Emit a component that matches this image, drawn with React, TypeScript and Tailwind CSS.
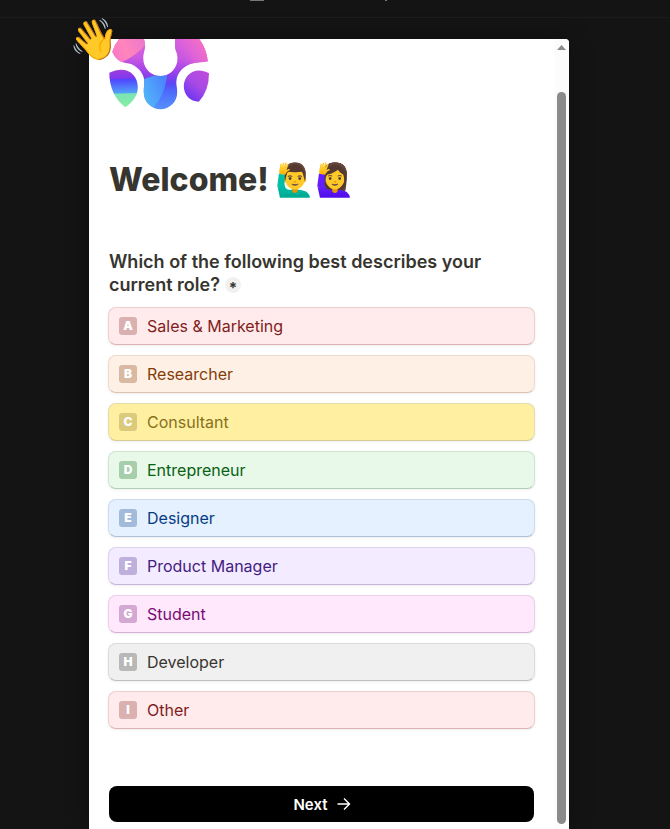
const options = [
  { key: "A", label: "Sales & Marketing", box: "bg-[#ffebeb] border-[#ecd0d0] border-b-[#dfb3b3]", badge: "bg-[#dbb0b1]", text: "text-[#7f1d1d]" },
  { key: "B", label: "Researcher", box: "bg-[#fff0e6] border-[#eddbd0] border-b-[#ddc1af]", badge: "bg-[#dab9a2]", text: "text-[#823d09]" },
  { key: "C", label: "Consultant", box: "bg-[#ffefa1] border-[#e5dcae] border-b-[#d6cb94]", badge: "bg-[#dbca7b]", text: "text-[#87711c]" },
  { key: "D", label: "Entrepreneur", box: "bg-[#e8f9ea] border-[#cfe4d2] border-b-[#b2ceb5]", badge: "bg-[#a7ceaa]", text: "text-[#096112]" },
  { key: "E", label: "Designer", box: "bg-[#e5f1ff] border-[#cddbec] border-b-[#aebfd8]", badge: "bg-[#a2bbdb]", text: "text-[#063c82]" },
  { key: "F", label: "Product Manager", box: "bg-[#f3ebff] border-[#ddd3eb] border-b-[#c2b4da]", badge: "bg-[#bfafdb]", text: "text-[#43207f]" },
  { key: "G", label: "Student", box: "bg-[#ffe8fc] border-[#ebcfe8] border-b-[#d9b0d5]", badge: "bg-[#d5a7d3]", text: "text-[#770b73]" },
  { key: "H", label: "Developer", box: "bg-[#f0f0f0] border-[#dbdbdb] border-b-[#bfbfbf]", badge: "bg-[#b8b8b7]", text: "text-[#37352f]" },
  { key: "I", label: "Other", box: "bg-[#ffebeb] border-[#ecd0d0] border-b-[#dfb3b3]", badge: "bg-[#dbb0b1]", text: "text-[#7f1d1d]" },
];

function Logo() {
  return (
    <svg viewBox="109 39 101 71" className="block h-[71px] w-[101px]">
      <defs>
        <linearGradient id="body" x1="0" y1="39" x2="0" y2="109" gradientUnits="userSpaceOnUse">
          <stop offset="0" stopColor="#e065da" />
          <stop offset=".25" stopColor="#cc5be0" />
          <stop offset=".43" stopColor="#a945e8" />
          <stop offset=".54" stopColor="#8340ea" />
          <stop offset=".64" stopColor="#5a48f4" />
          <stop offset=".75" stopColor="#4e6afb" />
          <stop offset="1" stopColor="#5591ff" />
        </linearGradient>
        <linearGradient id="pink" x1="113" y1="58" x2="146" y2="42" gradientUnits="userSpaceOnUse">
          <stop offset="0" stopColor="#fb77c8" />
          <stop offset=".4" stopColor="#ff85bb" />
          <stop offset="1" stopColor="#ec78cc" />
        </linearGradient>
        <linearGradient id="rose" x1="206" y1="44" x2="177" y2="66" gradientUnits="userSpaceOnUse">
          <stop offset="0" stopColor="#f870c2" />
          <stop offset=".5" stopColor="#dc62da" />
          <stop offset="1" stopColor="#b04ce6" stopOpacity="0" />
        </linearGradient>
        <linearGradient id="cyan" x1="144" y1="94" x2="165" y2="84" gradientUnits="userSpaceOnUse">
          <stop offset="0" stopColor="#52b2f8" />
          <stop offset="1" stopColor="#4b86ff" />
        </linearGradient>
        <linearGradient id="leafLeft" x1="123" y1="69" x2="124" y2="108" gradientUnits="userSpaceOnUse">
          <stop offset="0" stopColor="#a63ed9" />
          <stop offset=".24" stopColor="#7d38ef" />
          <stop offset=".27" stopColor="#5046ff" />
          <stop offset=".61" stopColor="#52a1f6" />
          <stop offset=".64" stopColor="#7ce3b5" />
          <stop offset="1" stopColor="#86f19e" />
        </linearGradient>
        <linearGradient id="leafRight" x1="208" y1="72" x2="188" y2="98" gradientUnits="userSpaceOnUse">
          <stop offset="0" stopColor="#bf4bdc" />
          <stop offset=".5" stopColor="#a94ae5" />
          <stop offset="1" stopColor="#6e36f2" />
        </linearGradient>
        <clipPath id="bodyClip">
          <path d="M120 38 Q114.500 44 112.300 51.700 Q116 60.500 123.500 62.500 C127 63.500 130 63 134 65.500 C141 70 144.700 76 144.300 83 C144 87 143.800 88 143.800 92.500 A16.700 16.700 0 0 0 177.200 92.500 C177.200 87 176 85 176.400 81 C177.200 72 184 66 192 63.500 C197 62 202 62.500 207.800 61.200 Q206.500 48 198.500 38 H175 V46 C175 51 177.500 52 177.500 58.500 A17 17.500 0 0 1 143.300 58.500 C143.300 52 145.500 50 145 45 Q144.800 41 143.500 38 Z" />
        </clipPath>
      </defs>
      <g clipPath="url(#bodyClip)">
        <path fill="url(#body)" d="M109 38h101v72H109z" />
        <path fill="url(#pink)" d="M109 38H146V44Q138 55 120 63L109 60Z" />
        <path fill="url(#rose)" d="M174 38H210V64L193 65Q182 65 175 60Z" />
        <path fill="url(#cyan)" d="M142 80Q155 74 167 75Q165 97 151 110H142Z" />
      </g>
      <path fill="url(#leafLeft)" d="M109.300 72.700C125 65 137.800 73 137.800 87.500C137.800 96 132 102.500 125.300 107.300Q109.500 95 109.300 72.700Z" />
      <path fill="url(#leafRight)" d="M209 73.200C195 65.500 183.800 75 183.800 86C183.800 95 190 101.500 198.800 101.700Q209 91 209 73.200Z" />
    </svg>
  );
}

export default function App() {
  return (
    <main className="relative h-[829px] w-[670px] overflow-hidden bg-[#141414] pt-[39px] pl-[89px] font-['Inter','Noto_Color_Emoji',sans-serif] text-[#37352f]">
      <div className="absolute top-0 left-[250px] h-px w-[14px] bg-[#777]" />
      <div className="absolute top-0 left-[385px] h-px w-[2px] bg-[#777]" />
      <div className="absolute top-[17px] left-0 h-px w-full bg-[#1b1b1b]" />
      <section className="flex h-[790px] w-[480px] overflow-hidden rounded-tr bg-white shadow-[0_0_24px_rgba(0,0,0,0.3)]">
        <div className="w-[465px] pr-[19px] pl-[19px]">
          <div className="ml-px h-[71px]"><Logo /></div>
          <h1 className="mt-[48px] ml-px flex h-[44px] items-center text-[32px] font-extrabold whitespace-pre">
            <span>Welcome! </span>
            <span className="font-['Noto_Color_Emoji']">🙋‍♂️🙋‍♀️</span>
          </h1>
          <h2 className="mt-[48px] ml-px text-[18px] leading-[23px] font-semibold">
            Which of the following best describes your
            <br />
            <span className="flex items-center">
              current role?
              <span className="ml-[5px] flex size-4 items-center justify-center rounded-full bg-[#f1f1f0]">
                <span className="h-[10px] text-[15px] leading-[15px] font-bold">*</span>
              </span>
            </span>
          </h2>
          <div className="mt-[11px] flex flex-col gap-[10px]">
            {options.map((o) => (
              <div key={o.key} className={`flex h-[38px] w-[427px] items-center rounded-lg border pl-[10px] shadow-[0_1px_3px_rgba(0,0,0,0.07)] ${o.box}`}>
                <span className={`flex size-[18px] items-center justify-center rounded-[3px] text-[12px] leading-none font-black text-white ${o.badge}`}>{o.key}</span>
                <span className={`ml-[10px] text-[16px] leading-6 ${o.text}`}>{o.label}</span>
              </div>
            ))}
          </div>
          <button className="mt-[57px] ml-px flex h-9 w-[425px] items-center justify-center rounded-lg bg-black pt-[2px] pl-px text-[15px] font-semibold text-white">
            Next
            <svg width="14" height="14" viewBox="0 0 14 14" fill="none" stroke="currentColor" strokeWidth="1.4" className="mb-[2px] ml-[9px]">
              <path d="M.5 7H12.500M7 1.500L12.500 7L7 12.500" />
            </svg>
          </button>
        </div>
        <div className="flex w-[15px] flex-col items-center bg-[#fcfcfc] pt-[6px]">
          <svg width="9" height="5" viewBox="0 0 9 5"><path fill="#8b8b8b" d="M4.500 0L9 5H0Z" /></svg>
          <div className="mt-[42px] h-[732px] w-[9px] rounded-full bg-[#8b8b8b]" />
        </div>
      </section>
      <span className="absolute top-[15px] left-[69px] font-['Noto_Color_Emoji'] text-[40px] leading-[50px]">👋</span>
    </main>
  );
}
